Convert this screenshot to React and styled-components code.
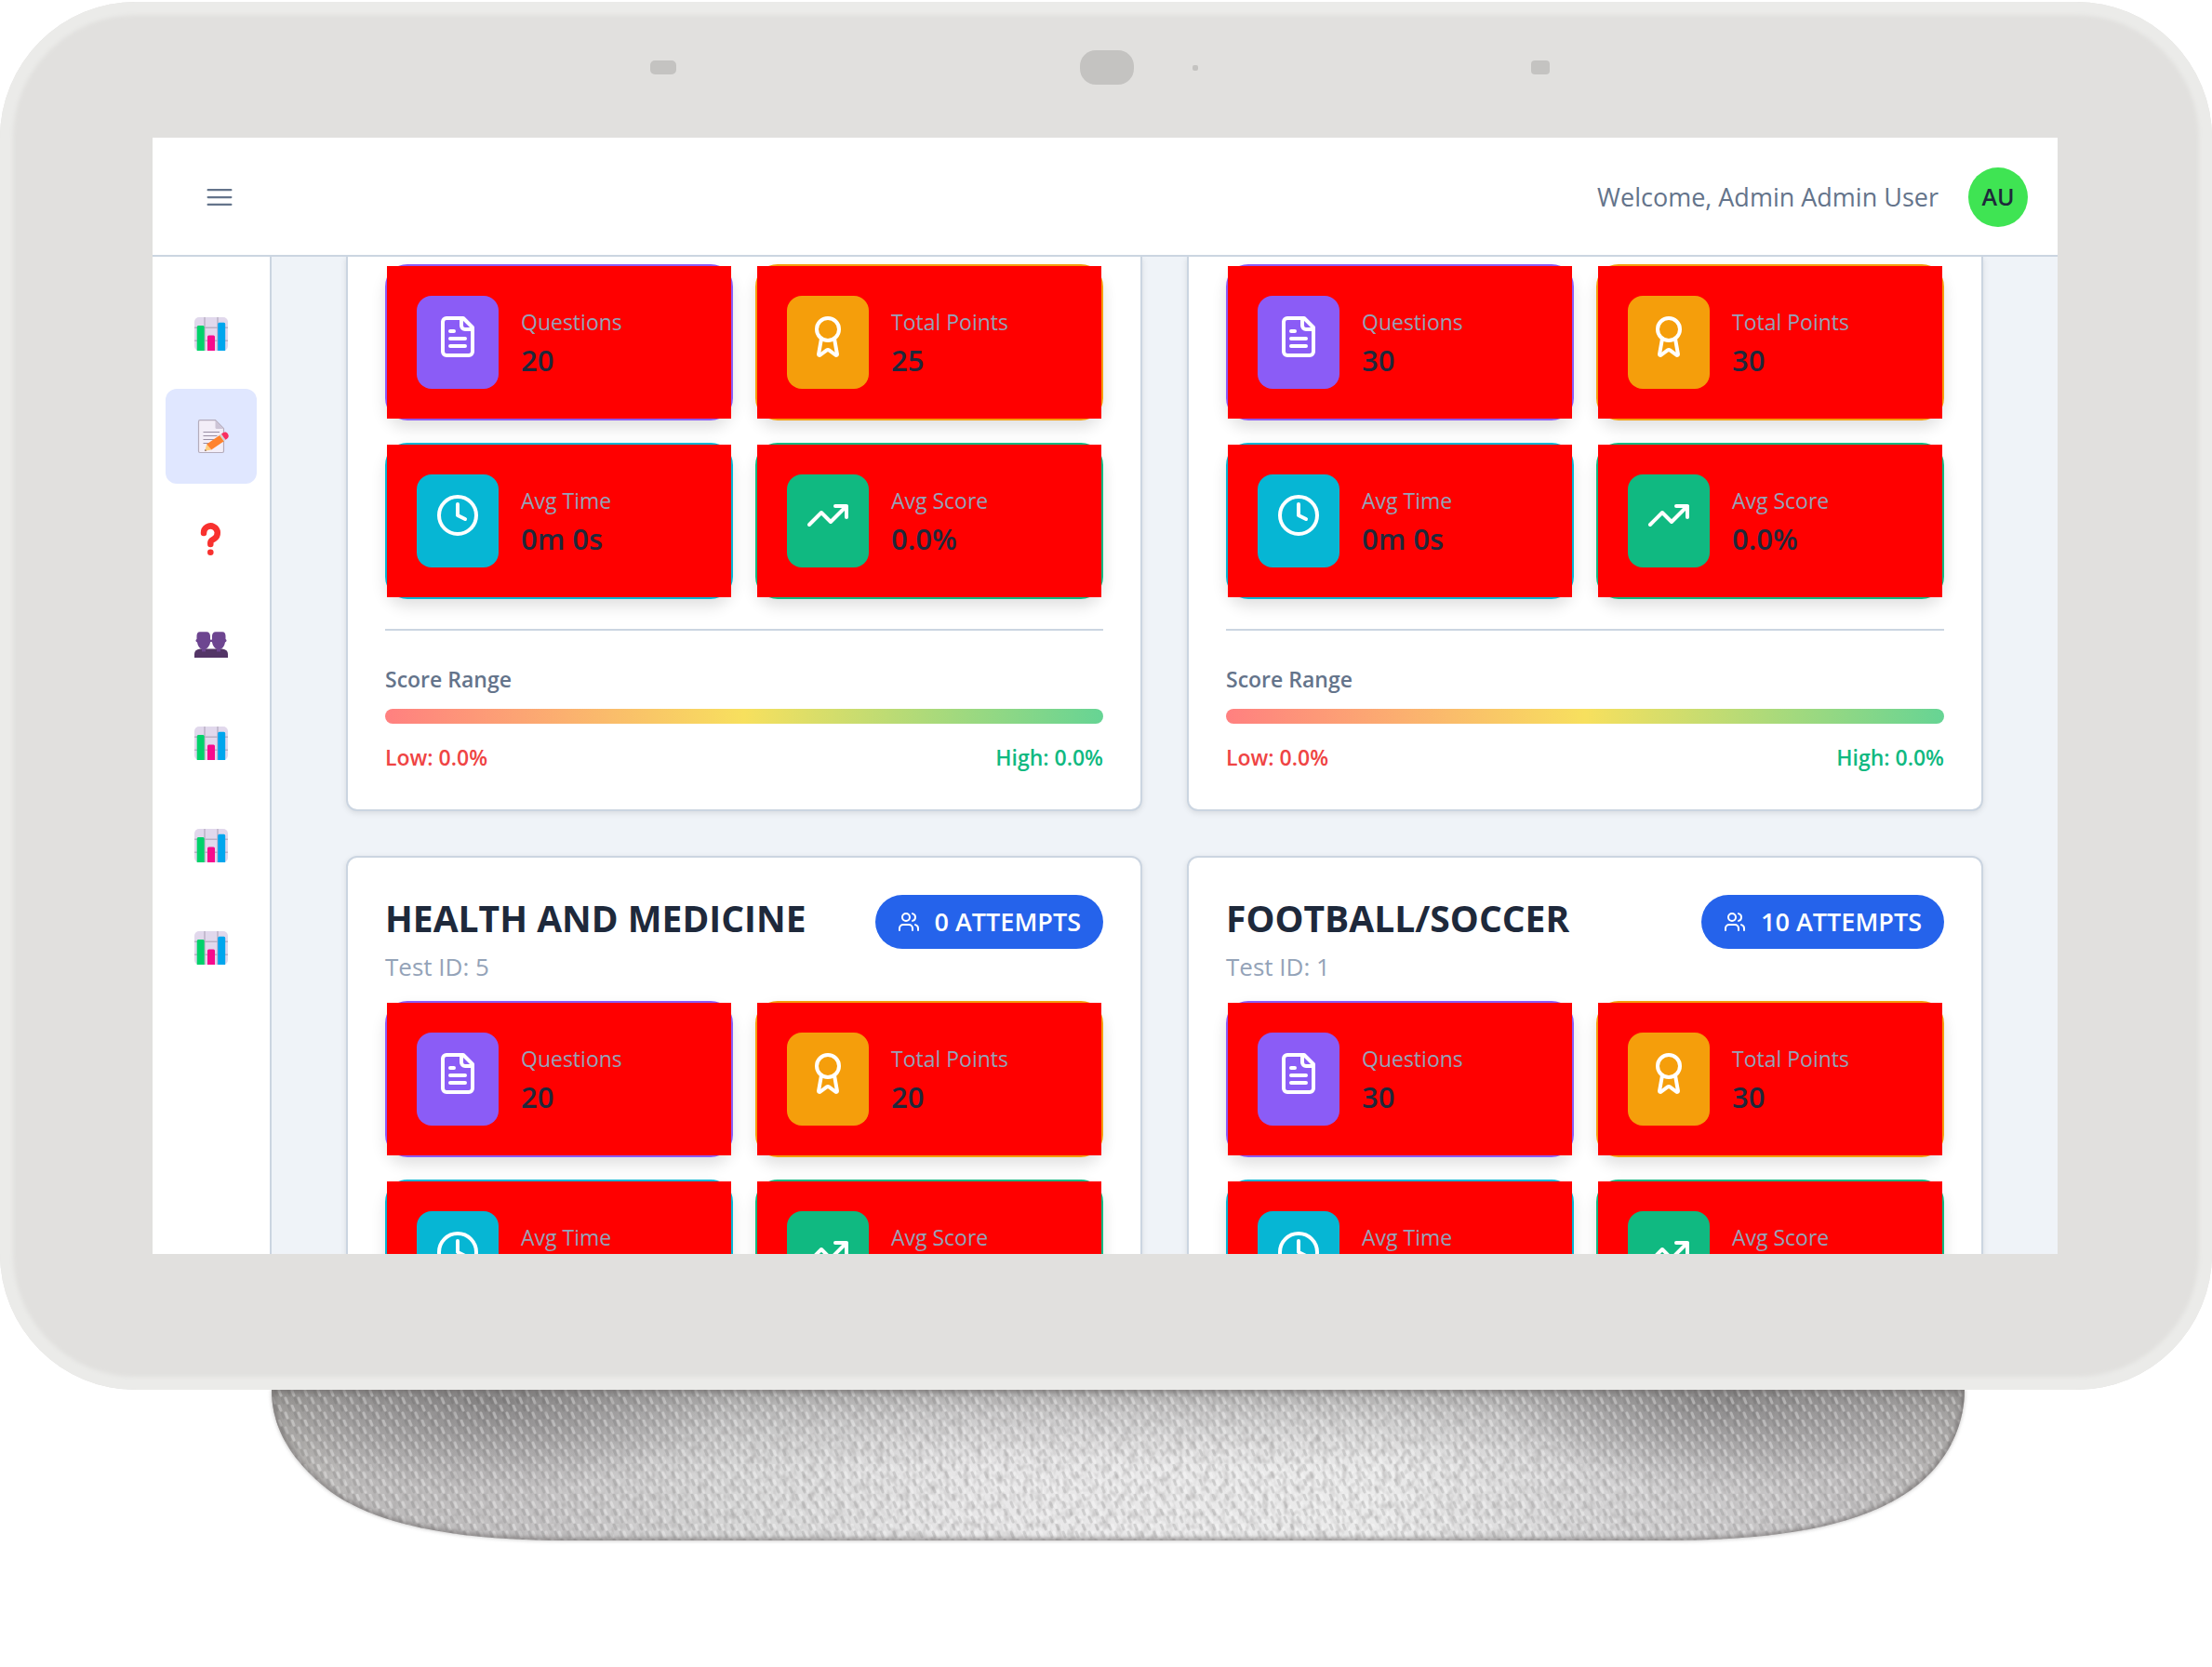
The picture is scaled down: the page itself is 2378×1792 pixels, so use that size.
import React from "react";
import styled, { createGlobalStyle } from "styled-components";

const GlobalStyle = createGlobalStyle`
  *, *::before, *::after { box-sizing: border-box; }
  body {
    margin: 0;
    background: #ffffff;
    color: #1e293b;
    font-family: "Open Sans", "Noto Sans", sans-serif;
    font-size: 27px;
    line-height: 1.5;
  }
  h2, p { margin: 0; }
`;

/* ---------- device ---------- */

const Stage = styled.div`
  padding: 2px 0 130px;
`;

const Device = styled.div`
  position: relative;
  padding: 0 166px 146px 164px;
  border-radius: 146px;
  background: #e1e0de;
  box-shadow: inset 0 0 4px 14px #ebebe9;
`;

const Sensors = styled.svg`
  display: block;
  width: 100%;
  height: 146px;
`;

const Screen = styled.div`
  display: flex;
  flex-direction: column;
  aspect-ratio: 2048 / 1200;
  overflow: hidden;
  background: #eff3f8;
`;

const Stand = styled.svg`
  display: block;
  width: 100%;
  height: auto;
`;

/* ---------- top bar ---------- */

const TopBar = styled.header`
  display: flex;
  align-items: center;
  justify-content: space-between;
  flex: none;
  padding: 32px 32px 30px 54px;
  border-bottom: 2px solid #cbd5e1;
  background: #ffffff;
`;

const MenuButton = styled.button`
  display: flex;
  padding: 0;
  border: 0;
  background: none;
  color: #64748b;
`;

const UserArea = styled.div`
  display: flex;
  align-items: center;
  gap: 32px;
`;

const Welcome = styled.span`
  color: #64748b;
`;

const Avatar = styled.button`
  width: 64px;
  height: 64px;
  padding: 0;
  border: 0;
  border-radius: 50%;
  background: #3fe453;
  color: #1e293b;
  font: inherit;
  font-size: 25px;
  font-weight: 600;
`;

/* ---------- body ---------- */

const Body = styled.div`
  display: grid;
  grid-template-columns: 128px minmax(0, 1fr);
  flex: 1;
  min-height: 0;
`;

const Sidebar = styled.nav`
  display: flex;
  flex-direction: column;
  gap: 8px;
  padding: 32px 14px;
  border-right: 2px solid #cbd5e1;
  background: #ffffff;
`;

const NavItem = styled.a`
  display: flex;
  align-items: center;
  justify-content: center;
  height: 102px;
  border-radius: 12px;
  background: ${(p) => (p.$active ? "#e0e7ff" : "transparent")};
`;

const Main = styled.main`
  display: grid;
  grid-template-columns: repeat(2, minmax(0, 1fr));
  align-content: start;
  gap: 48px;
  padding: 0 80px;
  overflow: hidden;
`;

const Card = styled.article`
  padding: ${(p) => (p.$continued ? "8px 40px 38px" : "40px 40px 38px")};
  border: 2px solid #cbd5e1;
  border-top-width: ${(p) => (p.$continued ? "0" : "2px")};
  border-radius: ${(p) => (p.$continued ? "0 0 12px 12px" : "12px")};
  background: #ffffff;
  box-shadow: 0 2px 6px rgba(0, 0, 0, 0.1);
`;

const CardHead = styled.div`
  display: flex;
  align-items: flex-start;
  justify-content: space-between;
  margin-bottom: 16px;
`;

const Title = styled.h2`
  margin-bottom: 6px;
  font-size: 39px;
  font-weight: 700;
  line-height: 50px;
`;

const TestId = styled.p`
  color: #94a3b8;
  font-size: 26px;
  line-height: 42px;
`;

const Badge = styled.span`
  display: flex;
  align-items: center;
  gap: 16px;
  padding: 8px 24px;
  border-radius: 29px;
  background: #2563eb;
  color: #ffffff;
  font-weight: 600;
  line-height: 42px;
  white-space: nowrap;
`;

const Stats = styled.div`
  display: grid;
  grid-template-columns: repeat(2, minmax(0, 1fr));
  gap: 24px;
`;

const StatCard = styled.div`
  border: 2px solid ${(p) => p.$tone};
  border-radius: 24px;
  box-shadow: 0 8px 16px rgba(0, 0, 0, 0.12);
`;

const StatFill = styled.div`
  display: flex;
  align-items: center;
  gap: 24px;
  padding: 32px;
  background: #ff0000;
`;

const StatIcon = styled.span`
  flex: none;
  width: 88px;
  height: 100px;
  padding: 20px;
  border-radius: 16px;
  background: ${(p) => p.$tone};
  color: #ffffff;
  line-height: 0;
`;

const StatLabel = styled.div`
  color: #94a3b8;
  font-size: 23px;
  line-height: 38px;
`;

const StatValue = styled.div`
  font-size: 31px;
  font-weight: 600;
  line-height: 44px;
`;

const Range = styled.div`
  margin-top: 32px;
  padding-top: 34px;
  border-top: 2px solid #cbd5e1;
  font-size: 23px;
  font-weight: 600;
  line-height: 36px;
`;

const RangeTitle = styled.div`
  color: #64748b;
`;

const RangeBar = styled.div`
  height: 16px;
  margin: 14px 0 18px;
  border-radius: 8px;
  background: linear-gradient(90deg, #ff8080, #f7e05e 50%, #66d494);
`;

const RangeEnds = styled.div`
  display: flex;
  justify-content: space-between;
`;

const Low = styled.span`
  color: #ef4444;
`;

const High = styled.span`
  color: #10b981;
`;

/* ---------- icons ---------- */

const Line = ({ size = 48, width = 2, children }) => (
  <svg
    width={size}
    height={size}
    viewBox="0 0 24 24"
    fill="none"
    stroke="currentColor"
    strokeWidth={width}
    strokeLinecap="round"
    strokeLinejoin="round"
    aria-hidden="true"
  >
    {children}
  </svg>
);

const FileIcon = () => (
  <Line>
    <path d="M15 2H6a2 2 0 0 0-2 2v16a2 2 0 0 0 2 2h12a2 2 0 0 0 2-2V7Z" />
    <path d="M14 2v4a2 2 0 0 0 2 2h4M10 9H8M16 13H8M16 17H8" />
  </Line>
);

const AwardIcon = () => (
  <Line>
    <path d="m15.477 12.89 1.515 8.526a.5.5 0 0 1-.81.47l-3.58-2.687a1 1 0 0 0-1.197 0l-3.586 2.686a.5.5 0 0 1-.81-.469l1.514-8.526" />
    <circle cx="12" cy="8" r="6" />
  </Line>
);

const ClockIcon = () => (
  <Line>
    <circle cx="12" cy="12" r="10" />
    <path d="M12 6v6l4 2" />
  </Line>
);

const TrendIcon = () => (
  <Line>
    <path d="m22 7-8.5 8.5-5-5L2 17M16 7h6v6" />
  </Line>
);

const UsersIcon = () => (
  <Line size={24}>
    <path d="M16 21v-2a4 4 0 0 0-4-4H6a4 4 0 0 0-4 4v2" />
    <circle cx="9" cy="7" r="4" />
    <path d="M22 21v-2a4 4 0 0 0-3-3.87M16 3.13a4 4 0 0 1 0 7.75" />
  </Line>
);

const MenuIcon = () => (
  <Line size={36} width={1.5}>
    <path d="M3.75 6.75h16.5M3.75 12h16.5M3.75 17.25h16.5" />
  </Line>
);

const Emoji = ({ children }) => (
  <svg width="36" height="36" viewBox="0 0 36 36" overflow="visible" aria-hidden="true">
    {children}
  </svg>
);

const ChartEmoji = () => (
  <Emoji>
    <rect width="36" height="36" rx="5" fill="#e1d8ec" />
    <path d="M11 0v36M25 0v36M0 11.3h36M0 25.3h36" stroke="#b9b0c4" strokeWidth="1.4" />
    <path d="M2.7 36V10.5a1.5 1.5 0 0 1 1.5-1.5h5a1.5 1.5 0 0 1 1.5 1.5V36Z" fill="#00d26a" />
    <path d="M14 36V21a1.5 1.5 0 0 1 1.5-1.5h5A1.5 1.5 0 0 1 22 21v15Z" fill="#f70a8d" />
    <path d="M25.2 36V7.2a1.5 1.5 0 0 1 1.5-1.5h5a1.5 1.5 0 0 1 1.5 1.5V36Z" fill="#00a6ed" />
  </Emoji>
);

const MemoEmoji = () => (
  <Emoji>
    <path d="M6 .7h16.5l9 9V34a1.5 1.5 0 0 1-1.5 1.5H6A1.5 1.5 0 0 1 4.500 34V2.200A1.500 1.500 0 0 1 6 .7Z" fill="#f3eef8" stroke="#b4acbc" strokeWidth="1.2" />
    <path d="M22.5 1v7.500a1.500 1.500 0 0 0 1.500 1.500h7.500Z" fill="#cdc4d6" />
    <path d="M9.500 13.500h17.500M9.500 17.500h15M9.500 21.500h12M9.500 25.500h8" stroke="#998ea4" strokeWidth="1.1" />
    <path d="m11.200 33.800 2-7.200 5 6Z" fill="#ffce7c" />
    <path d="m11.200 33.800.5-1.800 1.200 1.500Z" fill="#402a32" />
    <path d="m13.200 26.600 14.500-10 4.500 6.500-14 9.500Z" fill="#ff822d" />
    <path d="m27 17 2-1.500 4.500 6.300-2 1.500Z" fill="#d3d3d3" />
    <path d="m29 15.500 1.700-1.200c2-1.300 4-.8 5.200 1s1.300 3.800-.6 5.200l-1.800 1.300Z" fill="#f92f60" />
  </Emoji>
);

const QuestionEmoji = () => (
  <Emoji>
    <path d="M10 12a7.400 7.400 0 1 1 11.500 6c-2.500 1.700-4.200 2-4.200 4.500V24" fill="none" stroke="#f8312f" strokeWidth="6.5" strokeLinecap="round" />
    <circle cx="17.3" cy="32.8" r="3.3" fill="#f8312f" />
  </Emoji>
);

const PeopleEmoji = () => {
  const head =
    "M6 8.200h7c2.500 0 4 1.800 4 4.500v3.300c1 .8 1 2.800 0 3.500-.5 4-3.500 6.500-5 7.500v2.500H8V27c-2-1-4.500-3.500-5-7.500-2-.7-2-2.700-.5-3.500v-3.300c0-2.700 1-4.500 3.500-4.500Z";
  return (
    <Emoji>
      <path d="M0 36v-4c0-3 2-5 6-5.500h24c4 .5 6 2.500 6 5.500v4Z" fill="#533566" />
      <path d={head} fill="#6d4590" />
      <path d={head} fill="#6d4590" transform="translate(36 0) scale(-1 1)" />
      <path d="M16 17h4v2h-4Z" fill="#6d4590" />
    </Emoji>
  );
};

/* ---------- data ---------- */

const NAV = [
  { label: "Dashboard", Icon: ChartEmoji },
  { label: "Tests", Icon: MemoEmoji, active: true },
  { label: "Questions", Icon: QuestionEmoji },
  { label: "Users", Icon: PeopleEmoji },
  { label: "Results", Icon: ChartEmoji },
  { label: "Statistics", Icon: ChartEmoji },
  { label: "Reports", Icon: ChartEmoji },
];

const TESTS = [
  { key: "a", questions: "20", points: "25" },
  { key: "b", questions: "30", points: "30" },
  { key: "c", title: "HEALTH AND MEDICINE", id: 5, attempts: 0, questions: "20", points: "20" },
  { key: "d", title: "FOOTBALL/SOCCER", id: 1, attempts: 10, questions: "30", points: "30" },
];

const Stat = ({ tone, icon, label, value }) => (
  <StatCard $tone={tone}>
    <StatFill>
      <StatIcon $tone={tone}>{icon}</StatIcon>
      <div>
        <StatLabel>{label}</StatLabel>
        <StatValue>{value}</StatValue>
      </div>
    </StatFill>
  </StatCard>
);

const TestCard = ({ test }) => (
  <Card $continued={!test.title}>
    {test.title && (
      <CardHead>
        <div>
          <Title>{test.title}</Title>
          <TestId>Test ID: {test.id}</TestId>
        </div>
        <Badge>
          <UsersIcon />
          {test.attempts} ATTEMPTS
        </Badge>
      </CardHead>
    )}
    <Stats>
      <Stat tone="#8b5cf6" icon={<FileIcon />} label="Questions" value={test.questions} />
      <Stat tone="#f59e0b" icon={<AwardIcon />} label="Total Points" value={test.points} />
      <Stat tone="#06b6d4" icon={<ClockIcon />} label="Avg Time" value="0m 0s" />
      <Stat tone="#10b981" icon={<TrendIcon />} label="Avg Score" value="0.0%" />
    </Stats>
    <Range>
      <RangeTitle>Score Range</RangeTitle>
      <RangeBar />
      <RangeEnds>
        <Low>Low: 0.0%</Low>
        <High>High: 0.0%</High>
      </RangeEnds>
    </Range>
  </Card>
);

const STAND_SHAPE =
  "M292 0H2112C2112 40 2092 84 2048 112C1990 150 1900 162 1790 162H610C500 162 410 148 356 110C312 76 292 40 292 0Z";

const FabricStand = () => (
  <Stand viewBox="0 0 2378 174" aria-hidden="true">
    <defs>
      <linearGradient id="cloth">
        <stop offset="0" stopColor="#b4b2ae" />
        <stop offset="0.06" stopColor="#bcbaba" />
        <stop offset="0.16" stopColor="#c4c2c3" />
        <stop offset="0.28" stopColor="#d8d8d8" />
        <stop offset="0.42" stopColor="#e8e7e8" />
        <stop offset="0.65" stopColor="#ebebeb" />
        <stop offset="0.78" stopColor="#d4d3d4" />
        <stop offset="0.92" stopColor="#c2c0c1" />
        <stop offset="1" stopColor="#b0aeac" />
      </linearGradient>
      <linearGradient id="topShade" x2="0" y2="1">
        <stop offset="0" stopColor="#6e6c6a" stopOpacity="0.5" />
        <stop offset="0.15" stopColor="#7a7878" stopOpacity="0.28" />
        <stop offset="0.5" stopColor="#8a8888" stopOpacity="0" />
      </linearGradient>
      <radialGradient id="blob">
        <stop offset="0" stopColor="#6b696a" stopOpacity="0.6" />
        <stop offset="1" stopColor="#6b696a" stopOpacity="0" />
      </radialGradient>
      <filter id="grain" x="0" y="0" width="100%" height="100%">
        <feTurbulence type="fractalNoise" baseFrequency="0.14 0.1" numOctaves="2" seed="4" />
        <feColorMatrix values="0 0 0 0 0.35  0 0 0 0 0.34  0 0 0 0 0.34  1.1 0 0 0 -0.48" />
      </filter>
      <filter id="soft" x="-5%" y="-20%" width="110%" height="150%">
        <feGaussianBlur stdDeviation="2" />
      </filter>
      <pattern id="weave" width="14" height="16" patternUnits="userSpaceOnUse">
        <path d="M2 1l2 5M9 9l2 5" stroke="#4c4a4a" strokeOpacity="0.16" strokeWidth="3" strokeLinecap="round" />
        <path d="M6 1l2 5M13 9l2 5M-1 9l2 5" stroke="#ffffff" strokeOpacity="0.32" strokeWidth="3" strokeLinecap="round" />
      </pattern>
      <clipPath id="standClip">
        <path d={STAND_SHAPE} />
      </clipPath>
    </defs>
    <path d={STAND_SHAPE} fill="#8a8888" filter="url(#soft)" opacity="0.6" />
    <g clipPath="url(#standClip)">
      <rect x="280" width="1850" height="170" fill="url(#cloth)" />
      <ellipse cx="530" cy="10" rx="260" ry="100" fill="url(#blob)" />
      <ellipse cx="1850" cy="10" rx="240" ry="100" fill="url(#blob)" />
      <rect x="280" width="1850" height="170" fill="url(#topShade)" />
      <rect x="280" width="1850" height="170" fill="url(#weave)" />
      <rect x="280" width="1850" height="170" filter="url(#grain)" />
      <path d={STAND_SHAPE} fill="none" stroke="#6f6d6d" strokeOpacity="0.6" strokeWidth="6" filter="url(#soft)" />
    </g>
  </Stand>
);

export default function App() {
  return (
    <Stage>
      <GlobalStyle />
      <Device>
        <Sensors viewBox="164 0 2048 146" aria-hidden="true">
          <g fill="#c4c3c1">
            <rect x="699" y="63" width="28" height="15" rx="5" />
            <rect x="1161" y="52" width="58" height="37" rx="17" />
            <rect x="1282" y="68" width="6" height="6" rx="2" />
            <rect x="1646" y="63" width="20" height="15" rx="4" />
          </g>
        </Sensors>
        <Screen>
          <TopBar>
            <MenuButton type="button" aria-label="Toggle menu">
              <MenuIcon />
            </MenuButton>
            <UserArea>
              <Welcome>Welcome, Admin Admin User</Welcome>
              <Avatar type="button">AU</Avatar>
            </UserArea>
          </TopBar>
          <Body>
            <Sidebar aria-label="Main">
              {NAV.map(({ label, Icon, active }) => (
                <NavItem key={label} href="#" aria-label={label} $active={active}>
                  <Icon />
                </NavItem>
              ))}
            </Sidebar>
            <Main>
              {TESTS.map((test) => (
                <TestCard key={test.key} test={test} />
              ))}
            </Main>
          </Body>
        </Screen>
      </Device>
      <FabricStand />
    </Stage>
  );
}
